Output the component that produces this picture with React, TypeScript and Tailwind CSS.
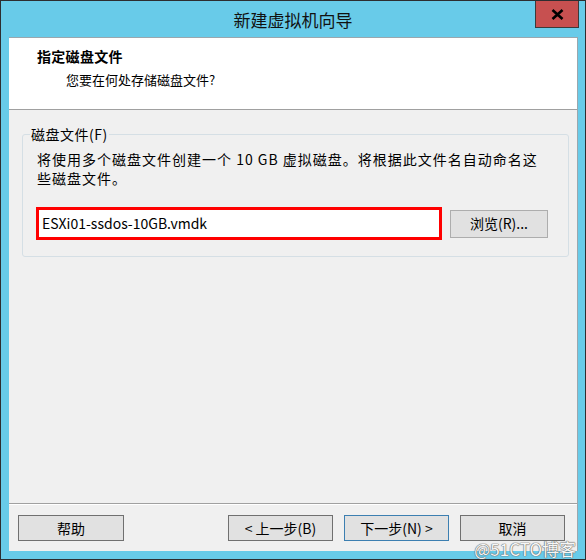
import React from "react";

function Btn({ children, w, primary }: { children: React.ReactNode; w: string; primary?: boolean }) {
  return (
    <div
      className={`${w} h-[26px] flex items-center justify-center bg-[#e1e1e1] text-[14px] text-black border ${
        primary ? "border-[#3c7fb1]" : "border-[#707070]"
      }`}
    >
      {children}
    </div>
  );
}

export default function App() {
  return (
    <div className="w-[586px] h-[560px] border border-[#2d2d30] bg-[#68cbe9] flex flex-col font-['Noto_Sans_CJK_SC',sans-serif] relative">
      {/* title bar */}
      <div className="relative h-[36px] flex items-center justify-center">
        <span className="text-[17px] text-[#111] leading-none">新建虚拟机向导</span>
        <div className="absolute right-[6px] top-0 w-[44px] h-[27px] bg-[#c75050] border border-[#3b3b3b] border-t-0 flex items-center justify-center">
          <svg width="13" height="11" viewBox="0 0 13 11">
            <path d="M1.5 1 L11.5 10 M11.5 1 L1.5 10" stroke="#000" strokeWidth="2.6" />
          </svg>
        </div>
      </div>
      {/* client */}
      <div className="ml-[8px] mr-[7px] h-[514px] flex flex-col bg-[#f0f0f0] border-t border-r border-[#9aa7ae]">
        <div className="h-[72px] bg-white border-b border-[#a0a0a0] pl-[28px] pt-[9px]">
          <div className="text-[14px] font-bold leading-[18px] text-black tracking-[0.3px]">指定磁盘文件</div>
          <div className="text-[13px] leading-[18px] text-black pl-[29px] mt-[6px]">您要在何处存储磁盘文件?</div>
        </div>
        <div className="flex-1 px-[13px] pt-[15px]">
          <fieldset className="border border-[#d5dfe5] rounded-[3px] pl-[14px] pr-[20px] pb-[15px] h-[132px]">
            <legend className="text-[14px] leading-[19px] ml-[-7px] px-[1px] text-black tracking-[0.5px]">磁盘文件(F)</legend>
            <p className="text-[14px] leading-[19px] text-black mt-[6px] tracking-[1px]">
              将使用多个磁盘文件创建一个 10 GB 虚拟磁盘。将根据此文件名自动命名这些磁盘文件。
            </p>
            <div className="flex items-center mt-[19px] ml-[-1px]">
              <div className="w-[406px] h-[33px] shrink-0 border-[3px] border-[#ff0000] bg-white flex items-center pl-[3px] text-[14px] text-black">
                ESXi01-ssdos-10GB.vmdk
              </div>
              <div className="ml-[8px] w-[98px] h-[28px] shrink-0 flex items-center justify-center bg-[#e1e1e1] border border-[#adadad] text-[14px] text-black">
                浏览(R)...
              </div>
            </div>
          </fieldset>
        </div>
        <div className="border-t border-[#a0a0a0]">
          <div className="border-t border-white h-[47px] flex items-start pt-[10px] pl-[9px]">
            <Btn w="w-[106px]">帮助</Btn>
            <div className="ml-[104px]">
              <Btn w="w-[105px]">&lt; 上一步(B)</Btn>
            </div>
            <div className="ml-[11px]">
              <Btn w="w-[105px]" primary>
                下一步(N) &gt;
              </Btn>
            </div>
            <div className="ml-[11px]">
              <Btn w="w-[105px]">取消</Btn>
            </div>
          </div>
        </div>
      </div>
      <div className="absolute right-[9px] bottom-[0px] text-[17px] leading-[20px] text-[#f6f6f6] [text-shadow:0_0_1px_#666,0_0_1px_#666,0_0_1px_#666]">
        @51CTO博客
      </div>
    </div>
  );
}
